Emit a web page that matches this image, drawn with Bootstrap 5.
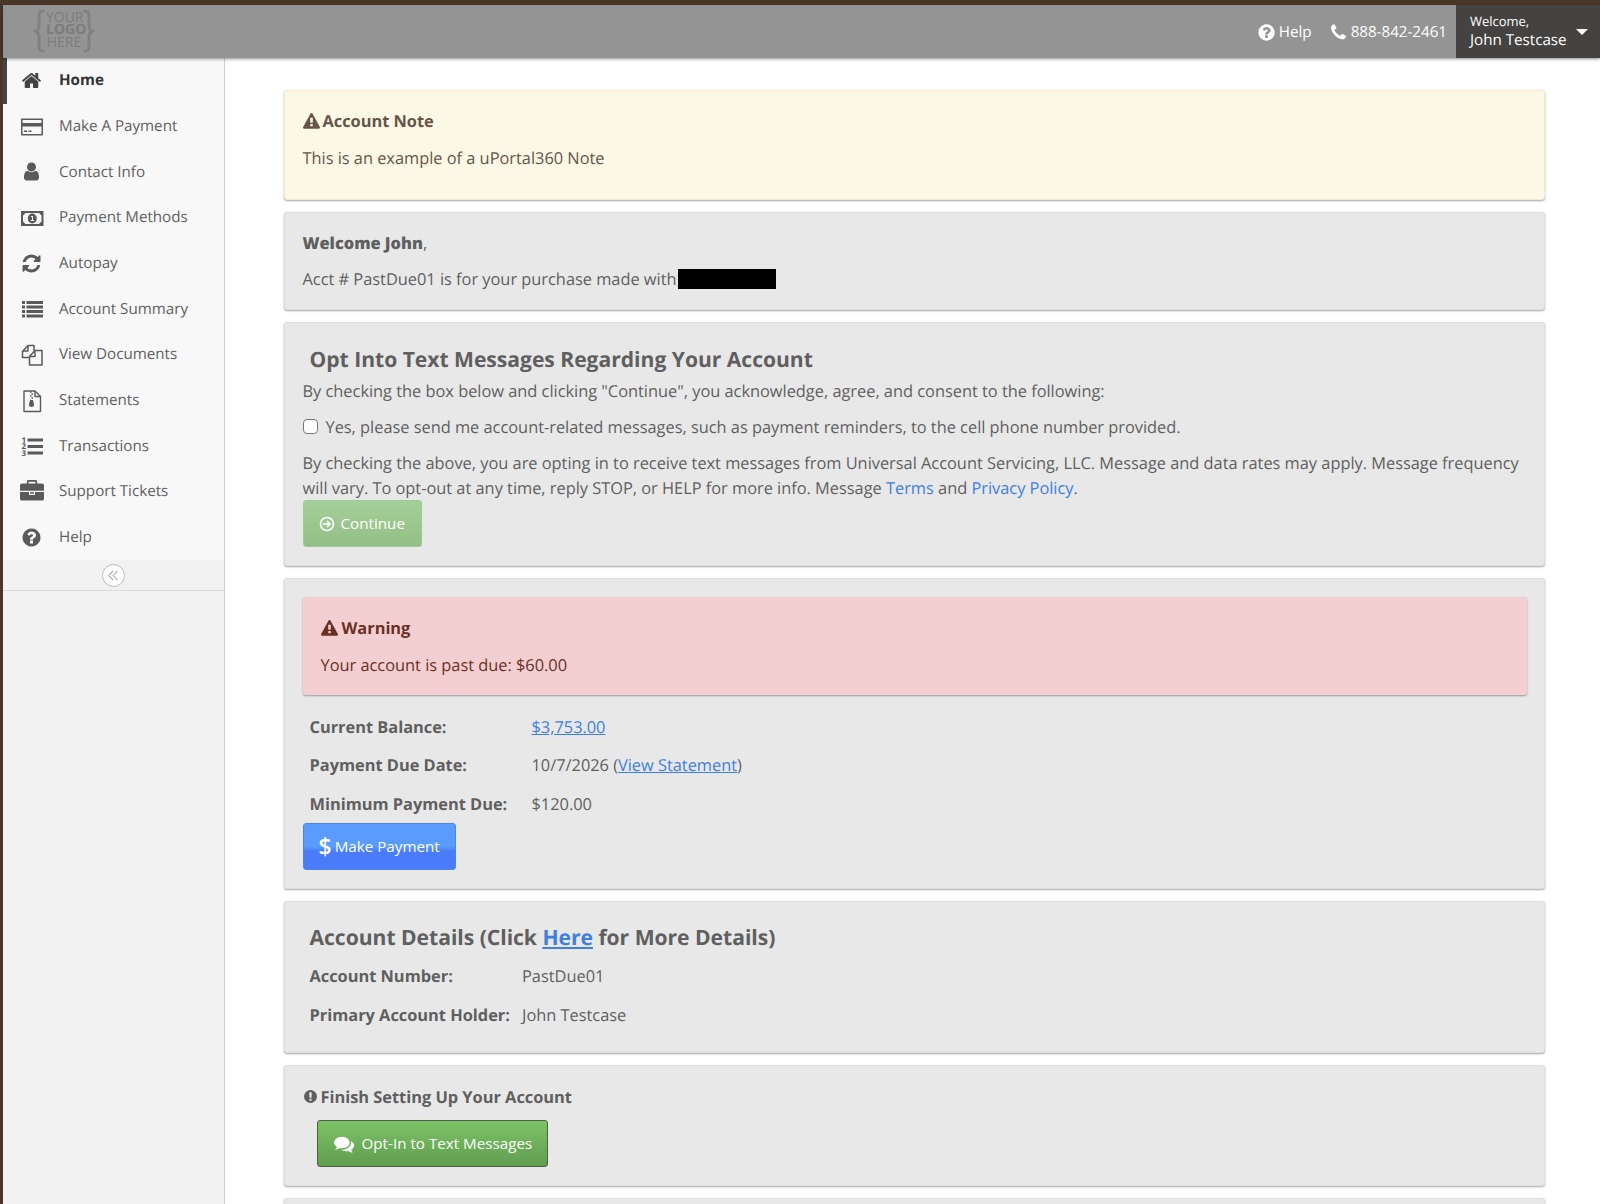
<!DOCTYPE html>
<html lang="en">
<head>
<meta charset="UTF-8">
<title>Home</title>
<link href="https://cdn.jsdelivr.net/npm/bootstrap@5.3.0/dist/css/bootstrap.min.css" rel="stylesheet">
<style>
html, body { height: 100%; overflow: hidden; }
body { font-family: "Open Sans", "Liberation Sans", sans-serif; font-size: 16.4px; letter-spacing: -.02px; line-height: 25px; color: #5f5f5f; background: #4a3728; text-rendering: geometricPrecision; }
a { color: #3f7fe0; }
svg.ic { fill: currentColor; display: block; }
.app { height: 100vh; padding: 5px 0 0 3px; display: flex; flex-direction: column; }
.topbar { height: 53px; background: #949494; box-shadow: 0 1px 3px rgba(0,0,0,.45); color: #fff; padding: 0; position: relative; z-index: 2; flex-wrap: nowrap; }
.logo { margin-left: 30px; margin-bottom: 2px; color: #7c7c7c; }
.logo-text { font-size: 14px; line-height: 12.3px; text-align: center; width: 36px; }
.top-link { font-size: 15.2px; color: #fff; text-decoration: none; gap: 3px; padding-top: 2px; }
.top-help { margin-right: 17px; }
.user-box { width: 144px; height: 53px; background: #444342; color: #fff; padding: 10px 0 0 14px; margin-left: 9px; line-height: 1; text-decoration: none; position: relative; display: block; }
.user-box small { font-size: 13px; display: block; margin-bottom: 3px; }
.user-box span { font-size: 15.2px; }
.user-box.dropdown-toggle::after { position: absolute; right: 12px; top: 24px; border-top: 6px solid #fff; border-left: 6px solid transparent; border-right: 6px solid transparent; border-bottom: 0; margin: 0; }
.shell { flex: 1; min-height: 0; display: flex; background: #fff; }
.sidebar { width: 222px; flex: none; background: #f2f2f2; border-right: 1px solid #cfcfcf; }
.sidebar .nav { background: #f8f8f8; }
.sidebar .nav-link { height: 45.67px; display: flex; align-items: center; padding: 0 0 0 56px; color: #5f5f5f; font-size: 15.2px; position: relative; }
.sidebar .nav-link.active { color: #333; font-weight: 700; border-left: 4px solid #444; padding: 0 0 0 52px; }
.sidebar .nav-icon { position: absolute; left: 17px; top: 11px; width: 24px; height: 24px; color: #5a5a5a; }
.sidebar .nav-icon.sm { left: 18px; top: 12px; width: 21px; height: 21px; }
.sidebar .nav-link.active .nav-icon { left: 14px; color: #444; }
.collapse-row { height: 31px; border-bottom: 1px solid #dcdcdc; }
.collapse-btn { width: 23px; height: 23px; border: 1px solid #bbb; border-radius: 50%; background: #fff; color: #888; }
.content { flex: 1; min-width: 0; padding: 32px 55px 0 59px; overflow: hidden; }
.panel { background: #e8e8e8; border: 1px solid #dedede; border-radius: 3px; box-shadow: 0 1px 2px rgba(0,0,0,.35); padding: 18px 17.5px; margin-bottom: 12px; color: #5f5f5f; }
.panel p { margin-bottom: 0; }
.panel-note { background: #fbf8e5; border-color: #f3ead0; color: #665548; padding-bottom: 29px; }
.title-line { font-weight: 700; line-height: 24px; margin-bottom: 11.5px; gap: 3px; }
.heading { font-size: 21.1px; font-weight: 700; line-height: 30px; padding-left: 7px; margin: 3.5px 0 0; color: #5f5f5f; }
.heading + p { margin-top: 3px; }
.heading + .info-row { margin-top: 3.5px; }
.check-row { margin: 11.5px 0 11px; }
.alert-warn { background: #f4cfd2; border: 0; border-radius: 3px; box-shadow: 0 1px 2px rgba(0,0,0,.35); padding: 19px 18px 18px; margin-bottom: 12.5px; color: #6a3023; }
.alert-warn .title-line { gap: 4px; }
.form-check-input { width: 15px; height: 15px; border: 1px solid #777; border-radius: 2px; margin: 0; flex: none; }
.info-row { padding-left: 7px; height: 38.5px; display: flex; align-items: center; }
.info-row b { flex: none; }
.lbl-wide { width: 222px; }
.lbl-narrow { width: 212.5px; }
.panel-finish { padding-top: 19px; }
.btn-pill { height: 47px; border-radius: 3px; font-size: 15.2px; display: inline-flex; align-items: center; padding: 0; color: #fff; }
.btn-continue { width: 119px; background: linear-gradient(#a5cf98, #93c087); border: 1px solid #a0c996; padding-left: 15px; gap: 6px; }
.btn-pay { width: 153px; background: linear-gradient(#5a9bff 50%, #4a7bf8 60%); border: 1px solid #4a82f0; padding-left: 15px; gap: 3px; }
.btn-pay i { font-style: normal; font-size: 23px; font-weight: 600; line-height: 1; }
.btn-opt { width: 231px; background: linear-gradient(#7dc266, #5f9e50); border: 1px solid #4b5f47; padding-left: 16px; gap: 8px; margin-left: 14px; }
.btn:hover { color: #fff; }
.redact { display: inline-block; width: 98px; height: 20px; background: #000; vertical-align: -4px; margin-left: 1px; }
</style>
</head>
<body>
<div class="app">
    <nav class="navbar topbar d-flex justify-content-between">
        <a class="logo d-flex align-items-center text-decoration-none" href="#">
            <svg width="13" height="44" viewBox="0 0 13 44" fill="none" stroke="#808080" stroke-width="3"><path d="M11.500 2C6 2 6 4 6 8v8c0 3-1 5-3.500 6C5 23 6 25 6 28v8c0 4 0 6 5.500 6"/></svg>
            <div class="logo-text">YOUR<br><b>LOGO</b><br>HERE</div>
            <svg width="13" height="44" viewBox="0 0 13 44" fill="none" stroke="#808080" stroke-width="3"><path d="M1.500 2C7 2 7 4 7 8v8c0 3 1 5 3.500 6C8 23 7 25 7 28v8c0 4 0 6-5.500 6"/></svg>
        </a>
        <div class="d-flex align-items-center">
            <a class="top-link top-help d-flex align-items-center" href="#">
                <svg class="ic" width="19" height="19" viewBox="0 0 1792 1792"><path d="M1024 1376v-192q0-14-9-23t-23-9h-192q-14 0-23 9t-9 23v192q0 14 9 23t23 9h192q14 0 23-9t9-23zm256-672q0-88-55.500-163t-138.500-116-170-41q-243 0-371 213-15 24 8 42l132 100q7 6 19 6 16 0 25-12 53-68 86-92 34-24 86-24 48 0 85.500 26t37.500 59q0 38-20 61t-68 45q-63 28-115.500 86.500t-52.500 125.500v36q0 14 9 23t23 9h192q14 0 23-9t9-23q0-19 21.500-49.500t54.500-49.500q32-18 49-28.500t46-35 44.500-48 28-60.500 12.500-81zm384 192q0 209-103 385.500t-279.500 279.500-385.500 103-385.500-103-279.500-279.500-103-385.500 103-385.500 279.500-279.500 385.500-103 385.500 103 279.500 279.500 103 385.500z"/></svg>
                Help</a>
            <a class="top-link d-flex align-items-center" href="#">
                <svg class="ic" width="19" height="19" viewBox="0 0 1792 1792"><path d="M1600 1240q0 27-10 70.500t-21 68.500q-21 50-122 106-94 51-186 51-27 0-53-3.500t-57.500-12.500-47-14.500-55.500-20.500-49-18q-98-35-175-83-127-79-264-216t-216-264q-48-77-83-175-3-9-18-49t-20.500-55.500-14.500-47-12.500-57.500-3.500-53q0-92 51-186 56-101 106-122 25-11 68.500-21t70.500-10q14 0 21 3 18 6 53 76 11 19 30 54t35 63.500 31 53.500q3 4 17.500 25t21.500 35.500 7 28.500q0 20-28.500 50t-62 55-62 53-28.500 46q0 9 5 22.500t8.500 20.500 14 24 11.500 19q76 137 174 235t235 174q2 1 19 11.500t24 14 20.500 8.500 22.500 5q18 0 46-28.500t53-62 55-62 50-28.500q14 0 28.500 7t35.500 21.500 25 17.500q25 15 53.500 31t63.500 35 54 30q70 35 76 53 3 7 3 21z"/></svg>
                888-842-2461</a>
            <a class="user-box dropdown-toggle" href="#"><small>Welcome,</small><span>John Testcase</span></a>
        </div>
    </nav>
    <div class="shell">
        <aside class="sidebar">
            <ul class="nav flex-column">
                <li class="nav-item"><a class="nav-link active" href="#">
                    <svg class="ic nav-icon sm" viewBox="0 0 1792 1792"><path d="M1472 992v480q0 26-19 45t-45 19h-384v-384h-256v384h-384q-26 0-45-19t-19-45v-480q0-1 .5-3t.5-3l575-474 575 474q1 2 1 6zm223-69l-62 74q-8 9-21 11h-3q-13 0-21-7l-692-577-692 577q-12 8-24 7-13-2-21-11l-62-74q-8-10-7-23.500t11-21.500l719-599q32-26 76-26t76 26l244 204v-195q0-14 9-23t23-9h192q14 0 23 9t9 23v408l219 182q10 8 11 21.500t-7 23.500z"/></svg>
                    Home</a></li>
                <li class="nav-item"><a class="nav-link" href="#">
                    <svg class="ic nav-icon" viewBox="0 0 24 24"><path fill-rule="evenodd" d="M2 3.500h20a1 1 0 0 1 1 1v15a1 1 0 0 1-1 1H2a1 1 0 0 1-1-1v-15a1 1 0 0 1 1-1zM2.500 5v3h19V5zm0 6.500v7.500h19v-7.500zM4 15.500h3V17H4zm4.500 0h3V17h-3z"/></svg>
                    Make A Payment</a></li>
                <li class="nav-item"><a class="nav-link" href="#">
                    <svg class="ic nav-icon sm" viewBox="0 0 1792 1792"><path d="M1536 1399q0 109-62.500 187t-150.500 78h-854q-88 0-150.500-78t-62.500-187q0-85 8.500-160.500t31.500-152 58.500-131 94-89 134.500-34.500q131 128 313 128t313-128q76 0 134.500 34.500t94 89 58.500 131 31.500 152 8.500 160.500zm-256-887q0 159-112.500 271.500t-271.500 112.500-271.500-112.500-112.500-271.500 112.500-271.500 271.500-112.500 271.500 112.500 112.500 271.500z"/></svg>
                    Contact Info</a></li>
                <li class="nav-item"><a class="nav-link" href="#">
                    <svg class="ic nav-icon" viewBox="0 0 24 24"><path fill-rule="evenodd" d="M1 5h22.500v15H1zM5.500 7 3 9.500v6L5.500 18h13.500l2.500-2.500v-6L19 7zM12.250 7.500a4.500 5 0 1 1 0 10 4.500 5 0 0 1 0-10zM11 10v1h1v3h-1v1h3v-1h-1v-4z"/></svg>
                    Payment Methods</a></li>
                <li class="nav-item"><a class="nav-link" href="#">
                    <svg class="ic nav-icon sm" viewBox="0 0 1792 1792"><path d="M1639 1056q0 5-1 7-64 268-268 434.500t-478 166.500q-146 0-282.500-55t-243.500-157l-129 129q-19 19-45 19t-45-19-19-45v-448q0-26 19-45t45-19h448q26 0 45 19t19 45-19 45l-137 137q71 66 161 102t187 36q134 0 250-65t186-179q11-17 53-117 8-23 30-23h192q13 0 22.500 9.500t9.500 22.500zm25-800v448q0 26-19 45t-45 19h-448q-26 0-45-19t-19-45 19-45l138-138q-148-137-349-137-134 0-250 65t-186 179q-11 17-53 117-8 23-30 23h-199q-13 0-22.500-9.500t-9.500-22.500v-7q65-268 270-434.500t480-166.500q146 0 284 55.500t245 156.500l130-129q19-19 45-19t45 19 19 45z"/></svg>
                    Autopay</a></li>
                <li class="nav-item"><a class="nav-link" href="#">
                    <svg class="ic nav-icon" viewBox="0 0 24 24"><path d="M2 4h3v3H2zm4.500 0H23v3H6.500zM2 8.500h3v3H2zm4.500 0H23v3H6.500zM2 13h3v3H2zm4.500 0H23v3H6.500zM2 17.500h3v3H2zm4.500 0H23v3H6.500z"/></svg>
                    Account Summary</a></li>
                <li class="nav-item"><a class="nav-link" href="#">
                    <svg class="nav-icon" viewBox="0 0 24 24" fill="none" stroke="currentColor" stroke-width="1.500" stroke-linejoin="round"><path d="M9 14.500H2.500V8.500L8 2.500h6v5"/><path d="M8 3v5H3"/><path d="M9.500 13.500l5.500-6h7v14.500H9.500z"/><path d="M15 8v5.500H10"/></svg>
                    View Documents</a></li>
                <li class="nav-item"><a class="nav-link" href="#">
                    <svg class="nav-icon" viewBox="0 0 24 24" fill="none" stroke="currentColor" stroke-width="1.400" stroke-linejoin="round"><path d="M4 2h11l5.500 5.500V22.500H4z"/><path d="M15 2v5.500h5.500"/><path d="M10 3h1.500M11.500 5H13M10 7h1.500M11.500 9H13" stroke-width="1.300"/><path d="M10 11h3l1 4.500a2.500 2.500 0 1 1-5 0z" fill="currentColor" stroke="none"/></svg>
                    Statements</a></li>
                <li class="nav-item"><a class="nav-link" href="#">
                    <svg class="ic nav-icon" viewBox="0 0 24 24"><text x="1.500" y="8.500" font-size="8" font-weight="700" font-family="Open Sans">1</text><text x="1.500" y="15" font-size="8" font-weight="700" font-family="Open Sans">2</text><text x="1.500" y="21.500" font-size="8" font-weight="700" font-family="Open Sans">3</text><path d="M7.500 4.500H23v3H7.500zM7.500 11H23v3H7.500zM7.500 17.500H23v3H7.500z"/></svg>
                    Transactions</a></li>
                <li class="nav-item"><a class="nav-link" href="#">
                    <svg class="ic nav-icon" viewBox="0 0 1792 1792"><path d="M640 256h512v-128h-512v128zm1152 640v480q0 66-47 113t-113 47h-1472q-66 0-113-47t-47-113v-480h672v160q0 26 19 45t45 19h320q26 0 45-19t19-45v-160h672zm-768 0v128h-256v-128h256zm768-480v384h-1792v-384q0-66 47-113t113-47h352v-160q0-40 28-68t68-28h576q40 0 68 28t28 68v160h352q66 0 113 47t47 113z"/></svg>
                    Support Tickets</a></li>
                <li class="nav-item"><a class="nav-link" href="#">
                    <svg class="ic nav-icon sm" viewBox="0 0 1792 1792"><path d="M1024 1376v-192q0-14-9-23t-23-9h-192q-14 0-23 9t-9 23v192q0 14 9 23t23 9h192q14 0 23-9t9-23zm256-672q0-88-55.500-163t-138.500-116-170-41q-243 0-371 213-15 24 8 42l132 100q7 6 19 6 16 0 25-12 53-68 86-92 34-24 86-24 48 0 85.500 26t37.500 59q0 38-20 61t-68 45q-63 28-115.500 86.500t-52.500 125.500v36q0 14 9 23t23 9h192q14 0 23-9t9-23q0-19 21.500-49.500t54.500-49.500q32-18 49-28.500t46-35 44.500-48 28-60.500 12.500-81zm384 192q0 209-103 385.500t-279.500 279.500-385.500 103-385.500-103-279.500-279.500-103-385.500 103-385.500 279.500-279.500 385.500-103 385.500 103 279.500 279.500 103 385.500z"/></svg>
                    Help</a></li>
            </ul>
            <div class="collapse-row d-flex align-items-center justify-content-center">
                <span class="collapse-btn d-flex align-items-center justify-content-center">
                    <svg width="11" height="11" viewBox="0 0 11 11" fill="none" stroke="currentColor" stroke-width="1"><path d="M5 1 .8 5.500 5 10M9.500 1 5.300 5.500 9.500 10"/></svg>
                </span>
            </div>
        </aside>
        <main class="content">
            <div class="panel panel-note">
                <div class="title-line d-flex align-items-center">
                    <svg class="ic" width="17" height="17" viewBox="0 0 1792 1792"><path d="M1024 1375v-190q0-14-9.500-23.500t-22.500-9.500h-192q-13 0-22.500 9.500t-9.500 23.500v190q0 14 9.500 23.500t22.500 9.500h192q13 0 22.500-9.500t9.500-23.500zm-2-374l18-459q0-12-10-19-13-11-24-11h-220q-11 0-24 11-10 7-10 21l17 457q0 10 10 16.500t24 6.500h185q14 0 23.500-6.500t10.500-16.500zm-14-934l768 1408q35 63-2 126-17 29-46.500 46t-63.500 17h-1536q-34 0-63.500-17t-46.500-46q-37-63-2-126l768-1408q17-31 47-49t65-18 65 18 47 49z"/></svg>
                    Account Note</div>
                <p>This is an example of a uPortal360 Note</p>
            </div>

            <div class="panel">
                <div class="title-line"><b>Welcome John</b><span class="fw-normal">,</span></div>
                <p>Acct # PastDue01 is for your purchase made with<span class="redact"></span></p>
            </div>

            <div class="panel">
                <h3 class="heading">Opt Into Text Messages Regarding Your Account</h3>
                <p>By checking the box below and clicking "Continue", you acknowledge, agree, and consent to the following:</p>
                <div class="check-row d-flex align-items-center gap-2">
                    <input class="form-check-input" type="checkbox" id="optin">
                    <label class="form-check-label" for="optin">Yes, please send me account-related messages, such as payment reminders, to the cell phone number provided.</label>
                </div>
                <p>By checking the above, you are opting in to receive text messages from Universal Account Servicing, LLC. Message and data rates may apply. Message frequency will vary. To opt-out at any time, reply STOP, or HELP for more info. Message <a class="text-decoration-none" href="#">Terms</a> and <a class="text-decoration-none" href="#">Privacy Policy</a>.</p>
                <button class="btn btn-pill btn-continue" type="button">
                    <svg width="16" height="16" viewBox="0 0 16 16" fill="none" stroke="#fff" stroke-width="1.600"><circle cx="8" cy="8" r="6.500"/><path d="M4 8h7M8 5l3 3-3 3"/></svg>
                    Continue</button>
            </div>

            <div class="panel">
                <div class="alert alert-warn" role="alert">
                    <div class="title-line d-flex align-items-center">
                        <svg class="ic" width="17" height="17" viewBox="0 0 1792 1792"><path d="M1024 1375v-190q0-14-9.500-23.500t-22.500-9.500h-192q-13 0-22.500 9.500t-9.500 23.500v190q0 14 9.500 23.500t22.500 9.500h192q13 0 22.500-9.500t9.500-23.500zm-2-374l18-459q0-12-10-19-13-11-24-11h-220q-11 0-24 11-10 7-10 21l17 457q0 10 10 16.500t24 6.500h185q14 0 23.500-6.500t10.500-16.500zm-14-934l768 1408q35 63-2 126-17 29-46.500 46t-63.500 17h-1536q-34 0-63.500-17t-46.500-46q-37-63-2-126l768-1408q17-31 47-49t65-18 65 18 47 49z"/></svg>
                        Warning</div>
                    <p>Your account is past due: $60.00</p>
                </div>
                <div class="info-row"><b class="lbl-wide">Current Balance:</b><a href="#">$3,753.00</a></div>
                <div class="info-row"><b class="lbl-wide">Payment Due Date:</b><span>10/7/2026 (<a href="#">View Statement</a>)</span></div>
                <div class="info-row"><b class="lbl-wide">Minimum Payment Due:</b><span>$120.00</span></div>
                <button class="btn btn-pill btn-pay" type="button"><i>$</i>Make Payment</button>
            </div>

            <div class="panel">
                <h3 class="heading">Account Details (Click <a href="#">Here</a> for More Details)</h3>
                <div class="info-row"><b class="lbl-narrow">Account Number:</b><span>PastDue01</span></div>
                <div class="info-row"><b class="lbl-narrow">Primary Account Holder:</b><span>John Testcase</span></div>
            </div>

            <div class="panel panel-finish">
                <div class="title-line d-flex align-items-center">
                    <svg class="ic" width="15" height="15" viewBox="0 0 1792 1792"><path d="M896 128q209 0 385.500 103t279.500 279.500 103 385.500-103 385.500-279.500 279.500-385.500 103-385.500-103-279.500-279.500-103-385.500 103-385.500 279.500-279.500 385.500-103zm128 1247v-190q0-14-9-23.500t-22-9.500h-192q-13 0-23 10t-10 23v190q0 13 10 23t23 10h192q13 0 22-9.500t9-23.500zm-2-344l18-621q0-12-10-18-10-8-24-8h-220q-14 0-24 8-10 6-10 18l17 621q0 10 10 17.500t24 7.500h185q14 0 23.500-7.500t10.500-17.500z"/></svg>
                    Finish Setting Up Your Account</div>
                <button class="btn btn-pill btn-opt" type="button">
                    <svg class="ic" width="20" height="20" viewBox="0 0 1792 1792"><path d="M1408 768q0 139-94 257t-256.500 186.500-353.500 68.500q-86 0-176-16-124 88-278 128-36 9-86 16h-3q-11 0-20.500-8t-11.500-21q-1-3-1-6.500t.5-6.500 2-6l2.500-5 3.500-5.500 4-5 4.500-5 4-4.500q5-6 23-25t26-29.500 22.500-29 25-38.500 20.500-44q-124-72-195-177t-71-224q0-139 94-257t256.500-186.500 353.500-68.500 353.500 68.500 256.500 186.500 94 257zm384 256q0 120-71 224.500t-195 176.500q10 24 20.500 44t25 38.500 22.500 29 26 29.500 23 25q1 1 4 4.500t4.500 5 4 5 3.500 5.500l2.500 5 2 6 .5 6.500-1 6.500q-3 14-13 22t-22 7q-50-7-86-16-154-40-278-128-90 16-176 16-271 0-472-132 58 4 88 4 161 0 309-45t264-129q125-92 192-212t67-254q0-77-23-152 129 71 204 178t75 230z"/></svg>
                    Opt-In to Text Messages</button>
            </div>
            <div class="panel"></div>
        </main>
    </div>
</div>
<script src="https://cdn.jsdelivr.net/npm/bootstrap@5.3.0/dist/js/bootstrap.bundle.min.js"></script>
</body>
</html>
